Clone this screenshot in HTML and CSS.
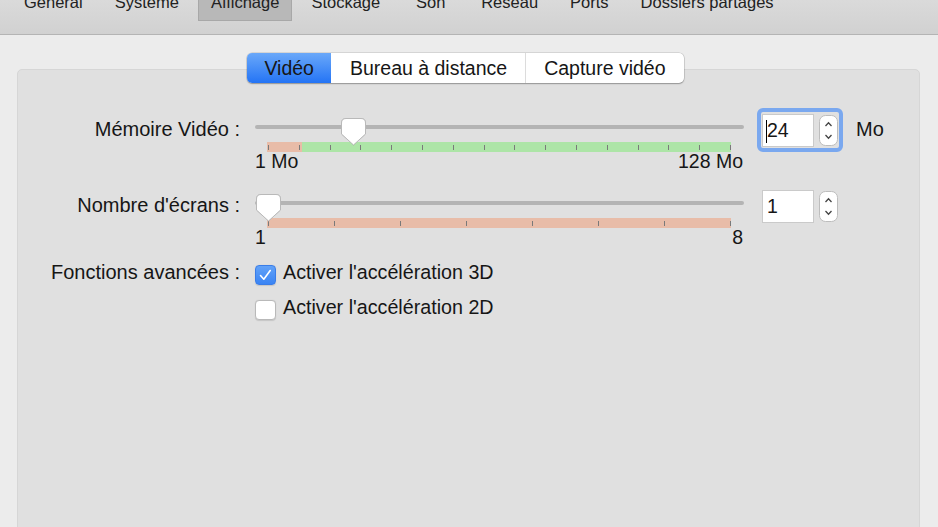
FILE: index.html
```html
<!DOCTYPE html>
<html lang="fr">
<head>
<meta charset="utf-8">
<title>Affichage</title>
<link rel="stylesheet" href="styles.css">
</head>
<body>
<div class="window">
  <nav class="toolbar">
    <span class="tb-item">Général</span>
    <span class="tb-item">Système</span>
    <span class="tb-item is-selected">Affichage</span>
    <span class="tb-item">Stockage</span>
    <span class="tb-item">Son</span>
    <span class="tb-item">Réseau</span>
    <span class="tb-item">Ports</span>
    <span class="tb-item">Dossiers partagés</span>
  </nav>
  <main class="content">
    <div class="seg-wrap">
      <div class="seg">
        <span class="seg-item is-active">Vidéo</span>
        <span class="seg-item">Bureau à distance</span>
        <span class="seg-item">Capture vidéo</span>
      </div>
    </div>
    <section class="panel">
      <div class="row">
        <span class="row-label">Mémoire Vidéo :</span>
        <div class="slider">
          <div class="track">
            <svg class="thumb" style="left:86px" viewBox="0 0 25 28" width="25" height="28"><path d="M5 0.5H20Q24.5 0.5 24.5 5V16L12.5 27L0.5 16V5Q0.5 0.5 5 0.5Z" fill="#fff" stroke="#b9b9b9"/></svg>
          </div>
          <div class="scale scale-mem">
            <i class="tick"></i><i class="tick"></i><i class="tick"></i><i class="tick"></i>
            <i class="tick"></i><i class="tick"></i><i class="tick"></i><i class="tick"></i>
            <i class="tick"></i><i class="tick"></i><i class="tick"></i><i class="tick"></i>
            <i class="tick"></i><i class="tick"></i><i class="tick"></i><i class="tick"></i>
          </div>
          <div class="scale-labels"><span>1 Mo</span><span>128 Mo</span></div>
        </div>
        <div class="spin is-focused">
          <div class="spin-field"><span class="caret"></span>24</div>
          <svg class="stepper" viewBox="0 0 19 31" width="19" height="31"><rect x="0.5" y="0.5" width="18" height="30" rx="6" fill="#fff" stroke="#bdbdbd"/><path d="M6.5 11L9.5 7.8L12.5 11M6.5 20L9.5 23.2L12.5 20" fill="none" stroke="#444" stroke-width="1.3"/></svg>
        </div>
        <span class="unit">Mo</span>
      </div>
      <div class="row row-screens">
        <span class="row-label">Nombre d'écrans :</span>
        <div class="slider">
          <div class="track">
            <svg class="thumb" style="left:1px" viewBox="0 0 25 28" width="25" height="28"><path d="M5 0.5H20Q24.5 0.5 24.5 5V16L12.5 27L0.5 16V5Q0.5 0.5 5 0.5Z" fill="#fff" stroke="#b9b9b9"/></svg>
          </div>
          <div class="scale scale-screens">
            <i class="tick"></i><i class="tick"></i><i class="tick"></i><i class="tick"></i>
            <i class="tick"></i><i class="tick"></i><i class="tick"></i><i class="tick"></i>
          </div>
          <div class="scale-labels"><span>1</span><span>8</span></div>
        </div>
        <div class="spin">
          <div class="spin-field">1</div>
          <svg class="stepper" viewBox="0 0 19 31" width="19" height="31"><rect x="0.5" y="0.5" width="18" height="30" rx="6" fill="#fff" stroke="#bdbdbd"/><path d="M6.5 11L9.5 7.8L12.5 11M6.5 20L9.5 23.2L12.5 20" fill="none" stroke="#444" stroke-width="1.3"/></svg>
        </div>
      </div>
      <div class="row row-checks">
        <span class="row-label">Fonctions avancées :</span>
        <div class="options">
          <label class="option"><span class="checkbox is-checked"><svg viewBox="0 0 21 20" width="21" height="20"><path d="M5.5 10.5L8.8 14.2L15.2 5.5" fill="none" stroke="#fff" stroke-width="1.6" stroke-linecap="round" stroke-linejoin="round"/></svg></span>Activer l'accélération 3D</label>
          <label class="option"><span class="checkbox"></span>Activer l'accélération 2D</label>
        </div>
      </div>
    </section>
  </main>
</div>
</body>
</html>
```

FILE: styles.css
```css
* { box-sizing: border-box; }
html, body { margin: 0; }
body {
  width: 938px;
  height: 527px;
  overflow: hidden;
  background: #ececec;
  font-family: "Liberation Sans", Arial, sans-serif;
  color: #161616;
}

.toolbar {
  height: 35px;
  display: flex;
  align-items: flex-start;
  gap: 6px;
  padding-left: 11px;
  background: linear-gradient(#dadada, #d1d1d1);
  border-bottom: 1px solid #b4b4b4;
  overflow: hidden;
  font-size: 16.5px;
  color: #222;
}
.tb-item {
  margin-top: -8px;
  padding: 0 12px 8px;
  min-width: 63px;
  line-height: 20px;
  text-align: center;
  white-space: nowrap;
  border: 1px solid transparent;
  border-top: none;
}
.tb-item.is-selected {
  background: #b8b8b8;
  border-color: #a8a8a8;
}

.content { padding: 18px 18px 0 17px; }

.seg-wrap {
  display: flex;
  justify-content: center;
  padding-right: 6px;
  margin-bottom: -14px;
  position: relative;
  z-index: 1;
}
.seg {
  display: flex;
  height: 30px;
  background: #fff;
  border-radius: 5px;
  box-shadow: 0 0 0 0.5px rgba(0,0,0,0.18), 0 1px 1.5px rgba(0,0,0,0.28);
  font-size: 19.5px;
}
.seg-item {
  padding: 0 18px;
  line-height: 30px;
  white-space: nowrap;
}
.seg-item + .seg-item { border-left: 1px solid #dcdcdc; }
.seg-item.is-active {
  background: linear-gradient(#6aa8f9, #2474f5);
  border-radius: 5px 0 0 5px;
  padding: 0 17px;
}
.seg-item.is-active + .seg-item { border-left-color: transparent; }

.panel {
  height: 600px;
  background: #e0e0e0;
  border: 1px solid #d6d6d6;
  border-radius: 5px;
  padding-top: 44px;
  font-size: 20px;
}

.row {
  display: flex;
  align-items: flex-start;
}
.row-screens { margin-top: 19px; }
.row-checks { margin-top: 10px; }

.row-label {
  flex: none;
  width: 222px;
  margin-right: 15px;
  margin-top: 4px;
  line-height: 22px;
  text-align: right;
  white-space: nowrap;
}

.slider {
  flex: none;
  width: 489px;
  margin-right: 18px;
  padding-top: 11px;
}
.track {
  position: relative;
  height: 4px;
  border-radius: 2px;
  background: #b4b4b4;
}
.thumb {
  position: absolute;
  top: -7px;
  filter: drop-shadow(0 0.5px 0.5px rgba(0,0,0,0.15));
}
.scale {
  width: 464px;
  height: 10px;
  margin: 13px 0 0 12px;
  padding-left: 1px;
  display: flex;
  justify-content: space-between;
  align-items: center;
}
.scale-mem { background: linear-gradient(to right, #e8bca8 35px, #ade5a7 35px); }
.scale-screens { background: #e8bca8; }
.tick {
  display: block;
  width: 1px;
  height: 5px;
  background: #7a7a7a;
}
.scale-labels {
  display: flex;
  justify-content: space-between;
  margin-top: -1px;
  padding-right: 1px;
  line-height: 20px;
  font-size: 19.5px;
}

.spin {
  flex: none;
  position: relative;
  display: flex;
  align-items: flex-start;
  gap: 5px;
  margin-right: 18px;
}
.spin.is-focused::before {
  content: "";
  position: absolute;
  top: -6px;
  left: -5px;
  right: -5px;
  bottom: -5px;
  border: 4px solid #7aa8ef;
  border-radius: 6px;
}
.spin-field {
  position: relative;
  width: 52px;
  height: 33px;
  padding-left: 4px;
  background: #fff;
  border: 1px solid #cacaca;
  font-size: 19.5px;
  line-height: 31px;
}
.caret {
  position: absolute;
  left: 3px;
  top: 5px;
  width: 1px;
  height: 23px;
  background: #000;
}
.stepper { display: block; margin-top: 1px; }

.unit {
  margin-top: 4px;
  line-height: 22px;
}

.options {
  display: flex;
  flex-direction: column;
  gap: 11px;
  margin-top: 4px;
}
.option {
  display: flex;
  align-items: flex-start;
  gap: 7px;
  line-height: 22px;
  font-size: 19.7px;
  white-space: nowrap;
}
.checkbox {
  flex: none;
  width: 21px;
  height: 20px;
  margin-top: 4px;
  border-radius: 4px;
  background: #fff;
  border: 1px solid #b9b9b9;
  box-shadow: 0 0.5px 1px rgba(0,0,0,0.12);
}
.checkbox svg { display: block; margin: -1px; }
.checkbox.is-checked {
  background: linear-gradient(#62a2f8, #3a84f4);
  border-color: #3a7de8;
}
```
